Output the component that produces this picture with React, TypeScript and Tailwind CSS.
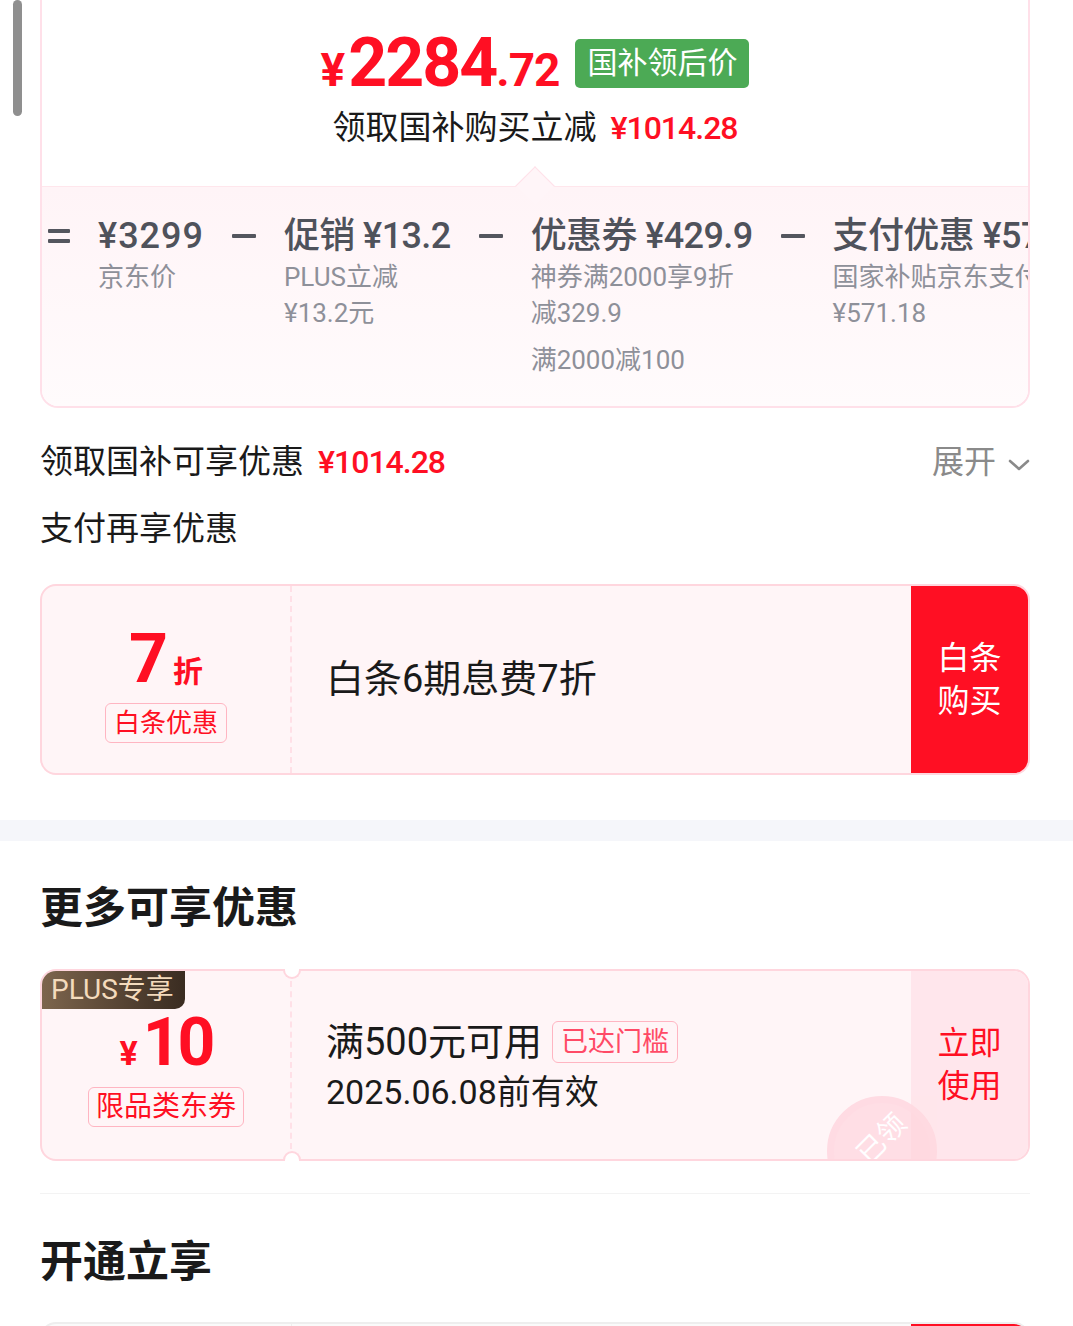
import React from "react";

const FONT = "font-['Roboto','Noto_Sans_CJK_SC',sans-serif]";

function Minus() {
  return (
    <div className="h-[44px] w-[24px] flex items-center">
      <div className="w-[24px] h-[4px] bg-[#54565e] rounded-[1px]" />
    </div>
  );
}

function Eq() {
  return (
    <div className="h-[44px] w-[22px] flex flex-col justify-center gap-[6px]">
      <div className="w-[22px] h-[4px] bg-[#54565e] rounded-[1px]" />
      <div className="w-[22px] h-[4px] bg-[#54565e] rounded-[1px]" />
    </div>
  );
}

function Col({ title, subs, extra, wide }: { title: string; subs: string[]; extra?: string; wide?: boolean }) {
  return (
    <div className="flex flex-col whitespace-nowrap">
      <div className={`leading-[44px] text-[36px] text-[#4f525b] font-medium ${wide ? "tracking-[1px]" : "tracking-[-0.6px]"}`}>{title}</div>
      {subs.map((s, i) => (
        <div key={i} className={`leading-[36px] text-[26px] text-[#8e9099] ${i === 0 ? "mt-[1px]" : ""}`}>
          {s}
        </div>
      ))}
      {extra && <div className="leading-[36px] text-[26px] text-[#8e9099] mt-[11px]">{extra}</div>}
    </div>
  );
}

export default function App() {
  return (
    <div className={`relative w-[1073px] h-[1326px] overflow-hidden bg-white ${FONT}`}>
      {/* scrollbar */}
      <div className="absolute left-[13px] top-0 w-[9px] h-[116px] rounded-full bg-[#8f8f8f] z-20" />

      <div className="pl-10 pr-[43px]">
        {/* top card */}
        <div className="relative border-x-2 border-b-2 border-[#ffe0e9] rounded-b-[18px]">
          <div className="h-[186px] bg-white flex flex-col items-center pt-[30px]">
            <div className="h-[66px] flex items-center gap-[16px]">
              <div className="flex items-baseline text-[#ff0f23] font-bold leading-none">
                <span className="text-[46px] mr-[3px]">¥</span>
                <span className="text-[68px] tracking-[-2px]">2284</span>
                <span className="text-[46px] tracking-[-1px]">.72</span>
              </div>
              <div className="h-[49px] px-[12px] rounded-[5px] bg-[#4caa55] text-white text-[30px] flex items-center leading-none">
                国补领后价
              </div>
            </div>
            <div className="mt-[12px] h-[40px] flex items-center gap-[14px]">
              <span className="text-[33px] text-[#1a1a1a]">领取国补购买立减</span>
              <span className="text-[32px] text-[#ff0f23] font-medium tracking-[-1px]">¥1014.28</span>
            </div>
          </div>
          {/* notch */}
          <div className="absolute left-[479px] top-[172px] w-[28px] h-[28px] rotate-45 bg-[#fff5f8] border-l border-t border-[#ffe0e9] z-10" />
          <div className="h-[220px] border-t border-[#ffe6ec] bg-gradient-to-b from-[#fff4f7] to-[#fffbfc] overflow-hidden rounded-b-[16px] pl-[6px] pt-[27px]">
            <div className="flex gap-[28px] whitespace-nowrap">
              <Eq />
              <Col title="¥3299" subs={["京东价"]} wide />
              <Minus />
              <Col title="促销 ¥13.2" subs={["PLUS立减", "¥13.2元"]} />
              <Minus />
              <Col title="优惠券 ¥429.9" subs={["神券满2000享9折", "减329.9"]} extra="满2000减100" />
              <Minus />
              <Col title="支付优惠 ¥571.18" subs={["国家补贴京东支付立减", "¥571.18"]} />
            </div>
          </div>
        </div>

        {/* 领取国补可享优惠 */}
        <div className="mt-[30px] h-[48px] flex items-center justify-between">
          <div className="flex items-center gap-[14px]">
            <span className="text-[33px] text-[#1a1a1a]">领取国补可享优惠</span>
            <span className="text-[32px] text-[#ff0f23] font-medium tracking-[-1px]">¥1014.28</span>
          </div>
          <div className="flex items-center gap-[12px] text-[32px] text-[#8a8a8a]">
            <span>展开</span>
            <svg width="22" height="14" viewBox="0 0 22 14" fill="none" className="mt-[6px]">
              <path d="M2 3 L11 11 L20 3" stroke="#8a8a8a" strokeWidth="2.6" strokeLinecap="round" strokeLinejoin="round" />
            </svg>
          </div>
        </div>

        <div className="mt-[19px] h-[48px] flex items-center text-[33px] text-[#1a1a1a]">支付再享优惠</div>

        {/* 白条 card */}
        <div className="mt-[31px] h-[191px] border-2 border-[#ffd6de] rounded-[16px] bg-[#fff5f7] flex overflow-hidden">
          <div className="w-[250px] border-r-2 border-dashed border-[#ffe0e7] flex flex-col items-center pt-[39px]">
            <div className="flex items-baseline text-[#ff0f23] font-bold leading-none">
              <span className="text-[68px]">7</span>
              <span className="text-[30px] ml-[5px]">折</span>
            </div>
            <div className="mt-[10px] h-[40px] px-[8px] border border-[#ffb5c2] rounded-[6px] text-[26px] text-[#ff0f23] flex items-center leading-none">
              白条优惠
            </div>
          </div>
          <div className="flex-1 flex items-center pl-[34px] text-[38px] text-[#1a1a1a]">白条6期息费7折</div>
          <div className="w-[117px] bg-[#ff0f23] text-white text-[32px] leading-[43px] flex flex-col items-center justify-center">
            <span>白条</span>
            <span>购买</span>
          </div>
        </div>
      </div>

      {/* gray band */}
      <div className="mt-[45px] h-[21px] bg-[#f5f6fa]" />

      <div className="pl-10 pr-[43px]">
        <div className="mt-[39px] h-[56px] flex items-center text-[43px] font-bold text-[#1a1a1a]">更多可享优惠</div>

        {/* coupon card */}
        <div className="relative mt-[33px] h-[192px] border-2 border-[#ffd6de] rounded-[16px] bg-[#fff5f7]">
          <div className="absolute left-[241px] top-[-2px] w-[18px] h-[10px] rounded-b-full bg-white border-2 border-t-0 border-[#ffd6de] z-20" />
          <div className="absolute left-[241px] bottom-[-2px] w-[18px] h-[10px] rounded-t-full bg-white border-2 border-b-0 border-[#ffd6de] z-20" />
          <div className="relative h-full flex overflow-hidden rounded-[14px]">
            <div className="absolute left-0 top-0 h-[38px] w-[143px] rounded-br-[10px] bg-gradient-to-r from-[#7d654d] to-[#3a2c21] text-[#f4dbbd] text-[28px] flex items-center pl-[9px] leading-none z-10">
              PLUS专享
            </div>
            <div className="w-[250px] border-r-2 border-dashed border-[#ffe0e7] flex flex-col items-center pt-[39px]">
              <div className="flex items-baseline text-[#ff0f23] font-bold leading-none">
                <span className="text-[34px] mr-[5px]">¥</span>
                <span className="text-[66px] tracking-[-3px]">10</span>
              </div>
              <div className="mt-[11px] h-[40px] px-[7px] border border-[#ffb5c2] rounded-[6px] text-[28px] text-[#ff0f23] flex items-center leading-none">
                限品类东券
              </div>
            </div>
            <div className="flex-1 flex flex-col justify-center pl-[34px]">
              <div className="h-[52px] flex items-center gap-[10px]">
                <span className="text-[38px] text-[#1a1a1a]">满500元可用</span>
                <span className="h-[42px] px-[8px] border border-[#ffb5c2] rounded-[6px] text-[27px] text-[#ff4a66] flex items-center leading-none">
                  已达门槛
                </span>
              </div>
              <div className="mt-[2px] text-[34px] text-[#1a1a1a] leading-[44px]">2025.06.08前有效</div>
            </div>
            <div className="w-[117px] bg-[#ffe6ec] text-[#ff0f23] text-[32px] leading-[43px] flex flex-col items-center justify-center">
              <span>立即</span>
              <span>使用</span>
            </div>
            {/* stamp */}
            <div className="absolute left-[785px] top-[125px] w-[110px] h-[110px] rounded-full border-[7px] border-[#ffd9e0] bg-[#ffd2da]/70 flex items-center justify-center opacity-90">
              <span className="-rotate-45 text-white text-[28px] leading-none -translate-y-[12px]">已领</span>
            </div>
          </div>
        </div>

        <div className="mt-[32px] h-[1px] bg-[#f3f3f3]" />

        <div className="mt-[40px] h-[56px] flex items-center text-[43px] font-bold text-[#1a1a1a]">开通立享</div>

        <div className="mt-[32px] h-[191px] border-2 border-[#eeeeee] rounded-[16px] bg-[#fafafa] flex overflow-hidden">
          <div className="w-[250px] border-r border-[#eeeeee]" />
          <div className="flex-1" />
          <div className="w-[117px] bg-[#ff0f23]" />
        </div>
      </div>
    </div>
  );
}
